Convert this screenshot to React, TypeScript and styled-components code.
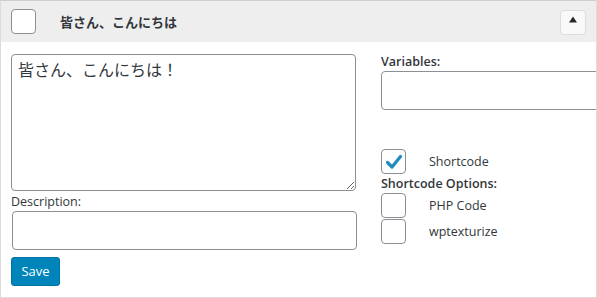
import React from "react";
import styled, { createGlobalStyle } from "styled-components";

const Global = createGlobalStyle`
  html, body { margin: 0; padding: 0; background: #fff; }
  body {
    font-family: "Open Sans", "Noto Sans CJK JP", sans-serif;
    font-size: 13px;
    color: #32373c;
  }
  * { box-sizing: border-box; }
`;

const Panel = styled.div`
  width: 597px;
  height: 298px;
  border: 1px solid #dcdcde;
  border-top-color: #cfcfcf;
  overflow: hidden;
  background: #fff;
`;

const Header = styled.div`
  height: 41px;
  background: #eeeeee;
  display: flex;
  align-items: center;
  padding: 0 10px 0 10px;
`;

const Title = styled.span`
  margin-left: 24px;
  font-family: "Noto Sans CJK JP", sans-serif;
  font-weight: 700;
  font-size: 13px;
  color: #32373c;
  flex: 1;
`;

const Box = styled.span`
  width: 25px;
  height: 25px;
  flex: none;
  border: 1px solid #8c8f94;
  border-radius: 4px;
  background: #fff;
  display: inline-flex;
  align-items: center;
  justify-content: center;
`;

const ToggleButton = styled.button`
  width: 26px;
  height: 25px;
  border: 1px solid #dcdcde;
  border-radius: 4px;
  background: #f9f9f9;
  padding: 0;
  display: flex;
  justify-content: center;
  align-items: flex-start;
  padding-top: 5px;
  margin-top: 1px;
`;

const Body = styled.div`
  display: flex;
  padding: 11px 0 0 10px;
  gap: 24px;
`;

const LeftColumn = styled.div`
  width: 346px;
  flex: none;
  display: flex;
  flex-direction: column;
  padding-top: 1px;
`;

const RightColumn = styled.div`
  flex: 1;
  display: flex;
  flex-direction: column;
`;

const TextArea = styled.textarea`
  width: 345px;
  height: 137px;
  border: 1px solid #8c8f94;
  border-radius: 4px;
  padding: 2px 6px;
  font-family: "Segoe UI", "Noto Sans CJK JP", sans-serif;
  font-size: 16px;
  line-height: 24px;
  color: #32373c;
  resize: both;
  margin: 0;
  display: block;
`;

const Label = styled.div<{ $strong?: boolean }>`
  font-size: 12.5px;
  line-height: 18px;
  font-weight: ${(p) => (p.$strong ? 600 : 400)};
  color: #32373c;
  white-space: nowrap;
`;

const Input = styled.input<{ $width: number; $indent?: number }>`
  width: ${(p) => p.$width}px;
  margin: 0 0 0 ${(p) => p.$indent ?? 0}px;
  height: 39px;
  flex: none;
  border: 1px solid #8c8f94;
  border-radius: 4px;
  background: #fff;
  padding: 0 8px;
  display: block;
`;

const SaveButton = styled.button`
  margin-top: 7px;
  width: 49px;
  height: 29px;
  background: #0085ba;
  border: 1px solid #0073aa;
  border-radius: 3px;
  color: #fff;
  font-family: "Open Sans", sans-serif;
  font-size: 13px;
  padding: 0;
  line-height: 27px;
`;

const CheckRow = styled.label`
  display: flex;
  align-items: center;
  gap: 23px;
  height: 25px;
  margin-bottom: 1px;
`;

const Spacer = styled.div<{ $h: number }>`
  height: ${(p) => p.$h}px;
  flex: none;
`;

const Check = () => (
  <svg width="18" height="16" viewBox="0 0 18 16">
    <path d="M2.5 8.5 L7 13 L15.5 2.5" fill="none" stroke="#1e8cbe" strokeWidth="3.2" strokeLinecap="round" strokeLinejoin="round" />
  </svg>
);

const UpArrow = () => (
  <svg width="10" height="7" viewBox="0 0 10 7">
    <path d="M1 6.5 L5 0.5 L9 6.5 Z" fill="#23282d" />
  </svg>
);

export default function App() {
  return (
    <>
      <Global />
      <Panel>
        <Header>
          <Box />
          <Title>皆さん、こんにちは</Title>
          <ToggleButton aria-label="toggle">
            <UpArrow />
          </ToggleButton>
        </Header>
        <Body>
          <LeftColumn>
            <TextArea defaultValue="皆さん、こんにちは！" />
            <Spacer $h={2} />
            <Label>Description:</Label>
            <Input $width={345} $indent={1} />
            <SaveButton>Save</SaveButton>
          </LeftColumn>
          <RightColumn>
            <Label $strong>Variables:</Label>
            <Input $width={240} />
            <Spacer $h={39} />
            <CheckRow>
              <Box>
                <Check />
              </Box>
              <Label>Shortcode</Label>
            </CheckRow>
            <Label $strong>Shortcode Options:</Label>
            <CheckRow>
              <Box />
              <Label>PHP Code</Label>
            </CheckRow>
            <CheckRow>
              <Box />
              <Label>wptexturize</Label>
            </CheckRow>
          </RightColumn>
        </Body>
      </Panel>
    </>
  );
}
